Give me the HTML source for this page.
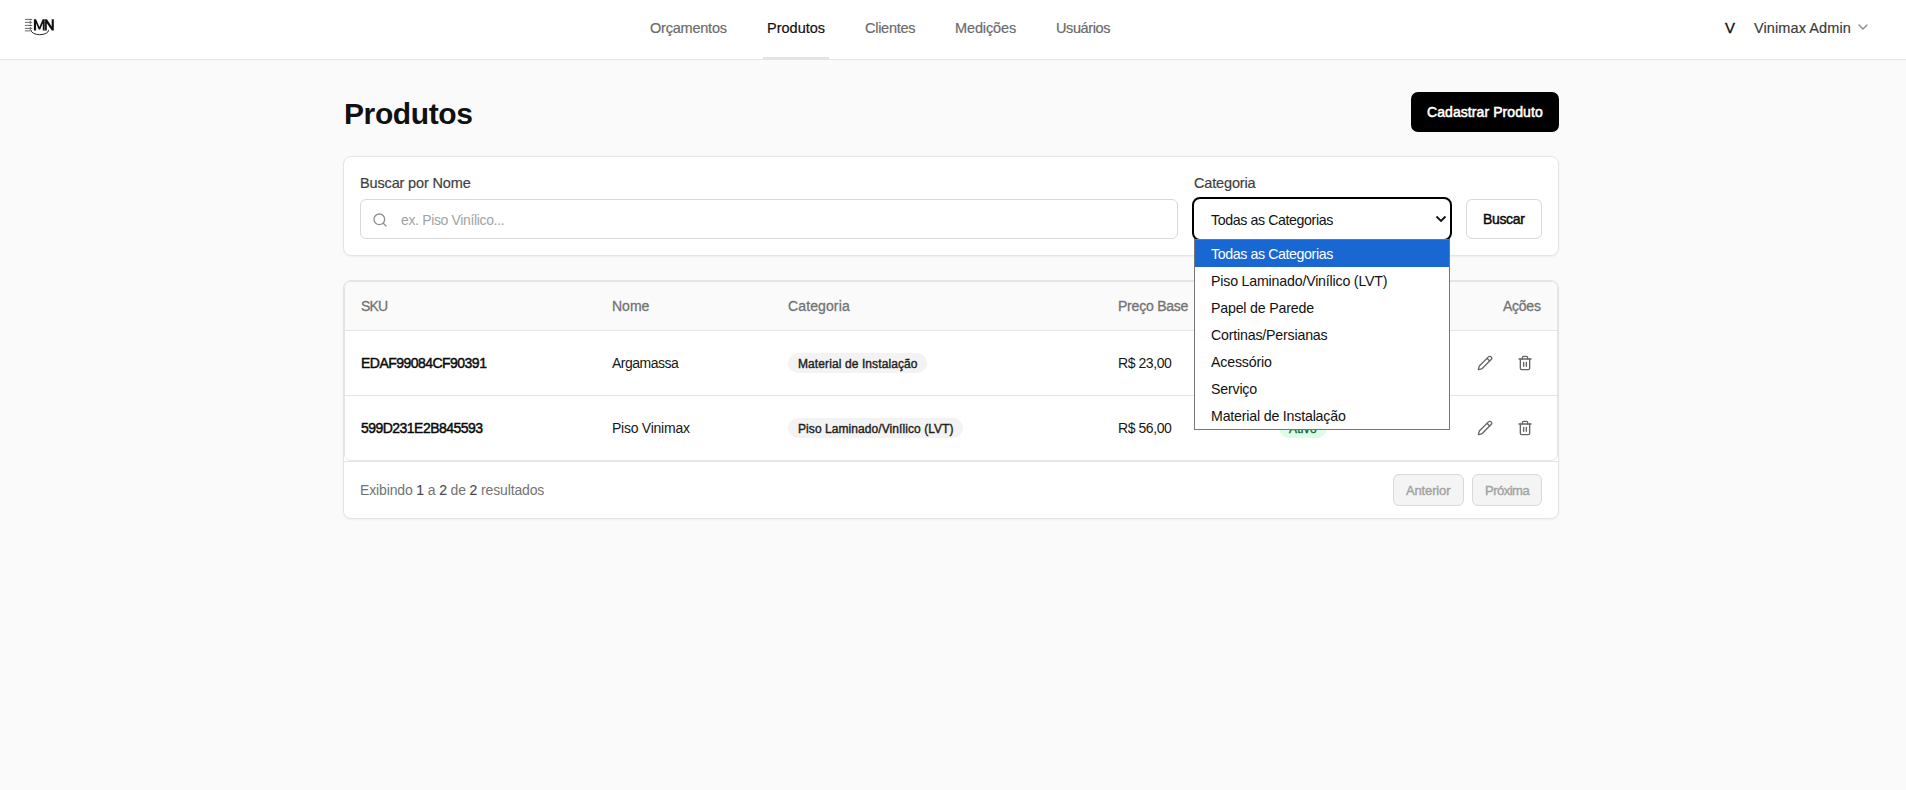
<!DOCTYPE html>
<html><head><meta charset="utf-8">
<style>
*{box-sizing:border-box;margin:0;padding:0}
html,body{width:1906px;height:790px;overflow:hidden;background:#fafafa;font-family:"Liberation Sans",sans-serif;color:#171717}
.a{position:absolute}
.t{position:absolute;white-space:nowrap;line-height:1}
#hdr{left:0;top:0;width:1906px;height:60px;background:#fff;border-bottom:1px solid #e5e5e5}
.nav{font-size:14.5px;color:#6b6b6b;top:21px;-webkit-text-stroke:0.2px #6b6b6b}
.card{background:#fff;border:1px solid #e5e5e5;border-radius:8px;box-shadow:0 1px 2px rgba(0,0,0,0.05)}
.lbl{font-size:14.5px;color:#3f3f3f;top:176px;letter-spacing:-0.15px;-webkit-text-stroke:0.2px #3f3f3f}
.opt{font-size:14.2px;letter-spacing:-0.19px;color:#111;left:1211px}
.th{font-size:14px;color:#737373;top:299px;-webkit-text-stroke:0.3px #737373}
.sku{font-size:14px;color:#0a0a0a;letter-spacing:-0.53px;-webkit-text-stroke:0.45px #0a0a0a}
.cell{font-size:14px;color:#171717}
.pill{height:20px;border-radius:10px;background:#f3f3f3}
.ptxt{font-size:12px;color:#1f1f1f;-webkit-text-stroke:0.4px #1f1f1f}
</style></head><body>
<!-- header -->
<div id="hdr" class="a"></div>
<svg class="a" style="left:22px;top:16px" width="36" height="22" viewBox="0 0 36 22">
  <g stroke="#444" stroke-width="0.8" fill="none">
    <path d="M2.9 3.4H10.2M2.9 6.3H10.2M2.9 9.4H10.2M2.9 12.4H10.2M2.9 14.9H8.5"/>
  </g>
  <path d="M8.3 3.4V14.5" stroke="#222" stroke-width="0.8" stroke-dasharray="1 0.9" fill="none"/>
  <path d="M11.9 3.2h2.2l3.3 7.9l3.3-7.9h2.1v11.4h-2v-7.4l-2.6 6.3h-1.5l-2.6-6.3v7.4h-2.2z" fill="#111"/>
  <path d="M22.8 3.2h2.1l4.8 7.3V3.2h2.1v11.4h-2l-5-7.4v7.4h-2z" fill="#111"/>
  <path d="M22.75 3.5V14.5" stroke="#fff" stroke-width="0.5" stroke-dasharray="0.8 0.8" fill="none"/>
  <path d="M9 14A8.8 4.6 0 0 0 26.6 14.2" stroke="#111" stroke-width="0.9" fill="none"/>
</svg>
<div class="t nav" style="left:650px;letter-spacing:-0.22px">Orçamentos</div>
<div class="t nav" style="left:767px;color:#111;-webkit-text-stroke:0.2px #111;letter-spacing:0px">Produtos</div>
<div class="t nav" style="left:865px;letter-spacing:-0.27px">Clientes</div>
<div class="t nav" style="left:955px;letter-spacing:-0.12px">Medições</div>
<div class="t nav" style="left:1056px;letter-spacing:-0.4px">Usuários</div>
<div class="a" style="left:763px;top:57px;width:66px;height:2px;background:#e4e4e7"></div>
<div class="t" style="left:1725px;top:20px;font-size:15px;color:#0a0a0a;-webkit-text-stroke:0.3px #0a0a0a">V</div>
<div class="t" style="left:1754px;top:21px;font-size:14.5px;letter-spacing:0.1px;color:#3a3a3a;-webkit-text-stroke:0.15px #3a3a3a">Vinimax Admin</div>
<svg class="a" style="left:1855px;top:19px" width="16" height="16" viewBox="0 0 24 24" fill="none" stroke="#8a8a8a" stroke-width="2" stroke-linecap="round" stroke-linejoin="round"><path d="m6 9 6 6 6-6"/></svg>

<!-- title -->
<div class="t" style="left:344px;top:99px;font-size:30px;letter-spacing:-0.4px;font-weight:700;color:#111">Produtos</div>
<div class="a" style="left:1411px;top:92px;width:148px;height:40px;background:#000;border-radius:7px"></div>
<div class="t" style="left:1427px;top:105px;font-size:14px;letter-spacing:0.08px;color:#fff;-webkit-text-stroke:0.55px #fff">Cadastrar Produto</div>

<!-- filter card -->
<div class="a card" style="left:343px;top:156px;width:1216px;height:100px"></div>
<div class="t lbl" style="left:360px">Buscar por Nome</div>
<div class="a" style="left:360px;top:199px;width:818px;height:40px;border:1px solid #d9d9d9;border-radius:6px;background:#fff"></div>
<svg class="a" style="left:372px;top:212px" width="16" height="16" viewBox="0 0 24 24" fill="none" stroke="#8f8f8f" stroke-width="2" stroke-linecap="round" stroke-linejoin="round"><circle cx="11" cy="11" r="8"/><path d="m21 21-4.3-4.3"/></svg>
<div class="t" style="left:401px;top:213px;font-size:14px;letter-spacing:-0.35px;color:#a3a3a3">ex. Piso Vinílico...</div>
<div class="t lbl" style="left:1194px">Categoria</div>
<div class="a" style="left:1192px;top:197px;width:260px;height:44px;border:2px solid #000;border-radius:8px;background:#fff"></div>
<div class="t" style="left:1211px;top:213px;font-size:14.2px;letter-spacing:-0.39px;color:#111">Todas as Categorias</div>
<svg class="a" style="left:1434px;top:214px" width="14" height="10" viewBox="0 0 14 10"><path d="M2.5 2.5L7 7L11.5 2.5" stroke="#111" stroke-width="1.8" fill="none"/></svg>
<div class="a" style="left:1466px;top:199px;width:76px;height:40px;border:1px solid #d9d9d9;border-radius:6px;background:#fff"></div>
<div class="t" style="left:1483px;top:212px;font-size:14px;color:#0a0a0a;letter-spacing:-0.35px;-webkit-text-stroke:0.45px #0a0a0a">Buscar</div>

<!-- table card -->
<div class="a card" style="left:343px;top:280px;width:1216px;height:239px"></div>
<div class="a" style="left:344px;top:281px;width:1214px;height:180px;border:1px solid #e5e5e5;border-radius:7px;overflow:hidden;background:#fff">
<div class="a" style="left:0;top:0;width:1212px;height:49px;box-sizing:border-box;background:#fafafa;border-bottom:1px solid #e5e5e5"></div>
<div class="a" style="left:0;top:113px;width:1212px;height:1px;background:#e5e5e5"></div>
</div>
<div class="a" style="left:343px;top:461px;width:1216px;height:1px;background:#e5e5e5"></div>
<div class="t th" style="left:361px;letter-spacing:-0.8px">SKU</div>
<div class="t th" style="left:612px">Nome</div>
<div class="t th" style="left:788px;letter-spacing:0.12px">Categoria</div>
<div class="t th" style="left:1118px;letter-spacing:-0.22px">Preço Base</div>
<div class="t th" style="left:1503px;letter-spacing:-0.25px">Ações</div>

<div class="t sku" style="left:361px;top:356px">EDAF99084CF90391</div>
<div class="t cell" style="left:612px;top:356px;letter-spacing:-0.5px">Argamassa</div>
<div class="a pill" style="left:788px;top:353px;width:139px"></div>
<div class="t ptxt" style="left:798px;top:358px;letter-spacing:0.1px">Material de Instalação</div>
<div class="t cell" style="left:1118px;top:356px;letter-spacing:-0.43px">R$ 23,00</div>

<div class="t sku" style="left:361px;top:421px">599D231E2B845593</div>
<div class="t cell" style="left:612px;top:421px;letter-spacing:-0.25px">Piso Vinimax</div>
<div class="a pill" style="left:788px;top:418px;width:175px"></div>
<div class="t ptxt" style="left:798px;top:423px;letter-spacing:0.07px">Piso Laminado/Vinílico (LVT)</div>
<div class="t cell" style="left:1118px;top:421px;letter-spacing:-0.43px">R$ 56,00</div>
<div class="a pill" style="left:1279px;top:418px;width:48px;background:#dcfce7"></div>
<div class="t ptxt" style="left:1289px;top:423px;color:#166534;-webkit-text-stroke:0.4px #166534;letter-spacing:0.25px">Ativo</div>

<!-- icons -->
<svg class="a" style="left:1477px;top:355px" width="16" height="16" viewBox="0 0 24 24" fill="none" stroke="#666" stroke-width="2" stroke-linecap="round" stroke-linejoin="round"><path d="M21.174 6.812a1 1 0 0 0-3.986-3.987L3.842 16.174a2 2 0 0 0-.5.83l-1.321 4.352a.5.5 0 0 0 .623.622l4.353-1.32a2 2 0 0 0 .83-.497z"/><path d="m15 5 4 4"/></svg>
<svg class="a" style="left:1517px;top:355px" width="16" height="16" viewBox="0 0 24 24" fill="none" stroke="#666" stroke-width="2" stroke-linecap="round" stroke-linejoin="round"><path d="M3 6h18"/><path d="M19 6v14c0 1-1 2-2 2H7c-1 0-2-1-2-2V6"/><path d="M8 6V4c0-1 1-2 2-2h4c1 0 2 1 2 2v2"/><path d="M10 11v6M14 11v6"/></svg>
<svg class="a" style="left:1477px;top:420px" width="16" height="16" viewBox="0 0 24 24" fill="none" stroke="#666" stroke-width="2" stroke-linecap="round" stroke-linejoin="round"><path d="M21.174 6.812a1 1 0 0 0-3.986-3.987L3.842 16.174a2 2 0 0 0-.5.83l-1.321 4.352a.5.5 0 0 0 .623.622l4.353-1.32a2 2 0 0 0 .83-.497z"/><path d="m15 5 4 4"/></svg>
<svg class="a" style="left:1517px;top:420px" width="16" height="16" viewBox="0 0 24 24" fill="none" stroke="#666" stroke-width="2" stroke-linecap="round" stroke-linejoin="round"><path d="M3 6h18"/><path d="M19 6v14c0 1-1 2-2 2H7c-1 0-2-1-2-2V6"/><path d="M8 6V4c0-1 1-2 2-2h4c1 0 2 1 2 2v2"/><path d="M10 11v6M14 11v6"/></svg>
<!-- footer -->
<div class="t" style="left:360px;top:483px;font-size:14px;letter-spacing:-0.14px;color:#737373">Exibindo <b style="font-weight:400;color:#4a4a4a;-webkit-text-stroke:0.15px #4a4a4a">1</b> a <b style="font-weight:400;color:#4a4a4a;-webkit-text-stroke:0.15px #4a4a4a">2</b> de <b style="font-weight:400;color:#4a4a4a;-webkit-text-stroke:0.15px #4a4a4a">2</b> resultados</div>
<div class="a" style="left:1393px;top:474px;width:71px;height:32px;border:1px solid #d9d9d9;border-radius:6px;background:#f4f4f4"></div>
<div class="t" style="left:1406px;top:484px;font-size:13px;letter-spacing:-0.14px;color:#a3a3a3;-webkit-text-stroke:0.4px #a3a3a3">Anterior</div>
<div class="a" style="left:1472px;top:474px;width:70px;height:32px;border:1px solid #d9d9d9;border-radius:6px;background:#f4f4f4"></div>
<div class="t" style="left:1485px;top:484px;font-size:13px;letter-spacing:-0.5px;color:#a3a3a3;-webkit-text-stroke:0.4px #a3a3a3">Próxima</div>

<!-- dropdown -->
<div class="a" style="left:1194px;top:239px;width:256px;height:191px;background:#fff;border:1px solid #767676"></div>
<div class="a" style="left:1195px;top:240px;width:254px;height:27px;background:#1967d2"></div>
<div class="t opt" style="top:247px;color:#fff;letter-spacing:-0.39px">Todas as Categorias</div>
<div class="t opt" style="top:274px">Piso Laminado/Vinílico (LVT)</div>
<div class="t opt" style="top:301px">Papel de Parede</div>
<div class="t opt" style="top:328px">Cortinas/Persianas</div>
<div class="t opt" style="top:355px">Acessório</div>
<div class="t opt" style="top:382px">Serviço</div>
<div class="t opt" style="top:409px">Material de Instalação</div>
</body></html>
